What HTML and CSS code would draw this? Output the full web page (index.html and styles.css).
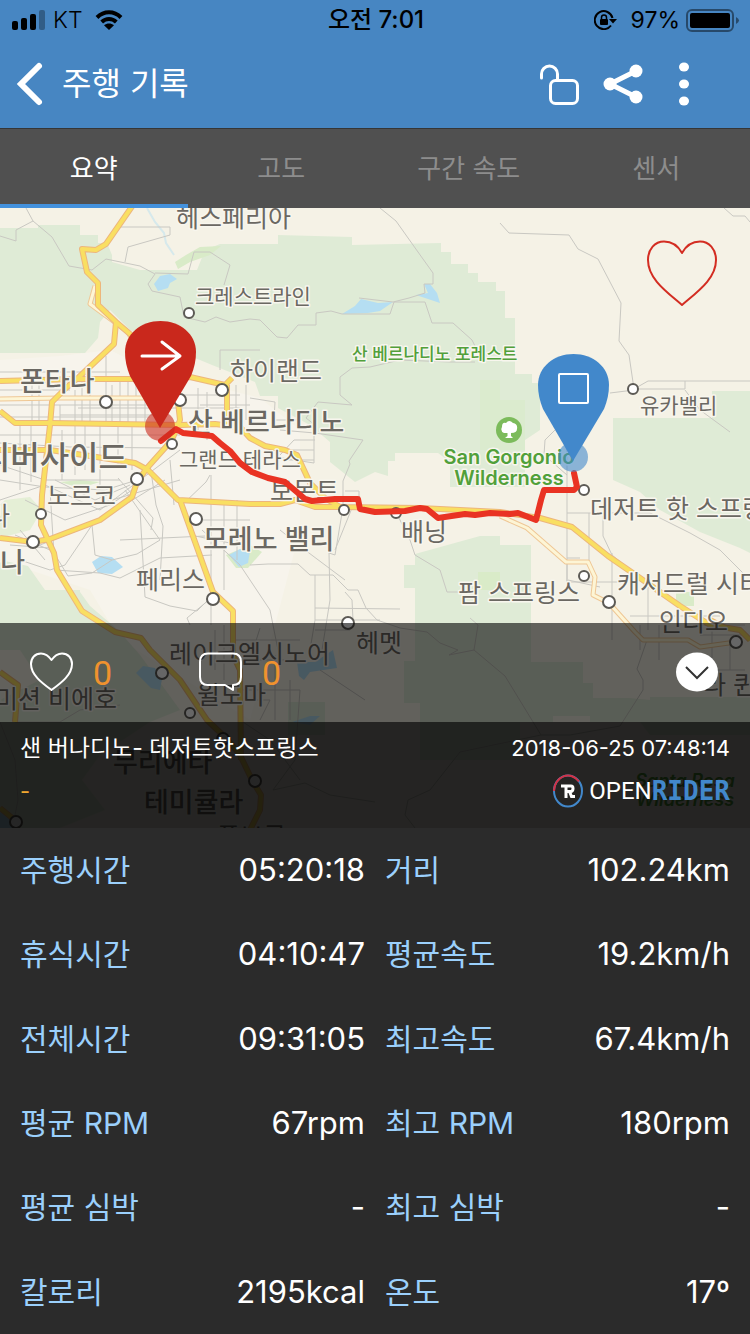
FILE: index.html
```html
<!DOCTYPE html>
<html lang="ko">
<head>
    <meta charset="UTF-8">
    <meta name="viewport" content="width=device-width, initial-scale=1.0">
    <title>주행 기록</title>
    <link rel="stylesheet" href="styles.css">
</head>
<body>
    <div class="status-bar">
        <div class="status-left">
            <svg width="33" height="20" viewBox="0 0 33 20">
                <rect x="0" y="11" width="6" height="9" rx="2"/>
                <rect x="9" y="8" width="6" height="12" rx="2"/>
                <rect x="18" y="4" width="6" height="16" rx="2"/>
                <rect x="27" y="0" width="6" height="20" rx="2" opacity=".3"/>
            </svg>
            <span>KT</span>
            <svg class="wifi" width="28" height="20" viewBox="0 0 28 20">
                <path d="M2 7.500C9 .500 19 .500 26 7.500M6.700 12C11 8 17 8 21.300 12" fill="none" stroke="#000" stroke-width="4"/>
                <path d="M14 20L9 15.200C12 12.800 16 12.800 19 15.200Z"/>
            </svg>
        </div>
        <div class="status-time">오전 7:01</div>
        <div class="status-right">
            <svg width="23" height="20" viewBox="0 0 23 20">
                <path d="M18.500 8A9 9 0 1 0 17 15.500" fill="none" stroke="#000" stroke-width="2"/>
                <path d="M15 9H23L19 13.500Z"/>
                <rect x="6" y="9" width="8" height="6" rx="1"/>
                <path d="M7.500 9V7.500A2.500 2.500 0 0 1 12.500 7.500V9" fill="none" stroke="#000" stroke-width="1.500"/>
            </svg>
            <span>97%</span>
            <svg width="54" height="23" viewBox="0 0 54 23">
                <rect x="1" y="1" width="46" height="21" rx="5" fill="none" stroke="#000" stroke-opacity=".45" stroke-width="2"/>
                <rect x="4" y="4" width="40" height="15" rx="2"/>
                <path d="M50 8Q56 11.500 50 15Z" opacity=".45"/>
            </svg>
        </div>
    </div>

    <header class="header">
        <button class="icon-button back" aria-label="뒤로">
            <svg width="26" height="44" viewBox="0 0 26 44"><path d="M21 4L3 22L21 40" fill="none" stroke="#fff" stroke-width="6" stroke-linecap="round"/></svg>
        </button>
        <h1>주행 기록</h1>
        <button class="icon-button" aria-label="잠금">
            <svg width="40" height="44" viewBox="0 0 40 44" fill="none" stroke="#fff" stroke-width="3" stroke-linecap="round">
                <path d="M.500 16V12A8 8 0 0 1 16.500 12V18"/>
                <rect x="9.500" y="18.500" width="27" height="23" rx="5"/>
            </svg>
        </button>
        <button class="icon-button" aria-label="공유">
            <svg width="40" height="44" viewBox="0 0 40 44" fill="#fff">
                <path d="M33 9L7 22L33 35" fill="none" stroke="#fff" stroke-width="5"/>
                <circle cx="7" cy="22" r="6.500"/><circle cx="33" cy="9" r="6.500"/><circle cx="33" cy="35" r="6.500"/>
            </svg>
        </button>
        <button class="icon-button" aria-label="더보기">
            <svg width="40" height="44" viewBox="0 0 40 44" fill="#fff">
                <ellipse cx="19" cy="5" rx="5" ry="4.500"/><ellipse cx="19" cy="22" rx="5" ry="4.500"/><ellipse cx="19" cy="39" rx="5" ry="4.500"/>
            </svg>
        </button>
    </header>

    <nav class="tabs">
        <button class="tab active">요약</button>
        <button class="tab">고도</button>
        <button class="tab">구간 속도</button>
        <button class="tab">센서</button>
    </nav>

    <section class="map">
        <svg class="map-canvas" viewBox="0 208 750 620" preserveAspectRatio="xMidYMid slice">
            <defs>
                <g id="highways">
                    <path d="M133 205L106 244L96 250L82 249L87 272L98 283V305L116 322L130 334L160 365"/>
                    <path d="M116 322L114 344L79 377L66 388L52 402L50 425L42 495L41 525L48 540L54 553L57 570L82 611L115 632L141 638L150 650L180 680L207 720L228 740L240 755L252 780L261 795L260 810L250 830"/>
                    <path d="M0 381L79 379H135L190 377L225 385L232 378M227 385V424"/>
                    <path d="M0 411L15 423H50L180 425L215 424L240 427L250 438L265 446L285 450L297 455L310 483L325 498L340 507L420 508L500 512L540 518L572 527L608 556L640 578L680 606L710 625L740 630L750 640"/>
                    <path d="M0 450H50L90 456L135 463L148 470L178 500L250 504H280L295 500L315 507H345"/>
                    <path d="M178 402L180 420L172 440L147 468L137 482L132 497L100 520L50 539L33 542L0 538"/>
                    <path d="M180 500L213 592L233 611V655L240 670L241 760"/>
                    <path d="M0 672L18 685L15 722M0 808L16 821M710 620L725 628"/>
                </g>
                <g id="light-roads">
                    <path d="M500 516L527 528L566 562H588L595 577L593 595L609 603L635 632L643 640H688L700 647L736 642"/>
                    <path d="M0 399L60 398H150M95 286L90 304L128 332L135 345"/>
                </g>
            </defs>

            <rect x="-1000" y="0" width="3000" height="1400" fill="#f5f2e6"/>

            <!-- city area -->
            <path d="M0 360L60 356L110 350L150 370L260 398L300 430L300 530L250 720L120 640L90 590L0 560Z" fill="#f7f4ec"/>

            <!-- parks and forest -->
            <g fill="#dfebd6">
                <path d="M0 228H38V225H80V235H98V243H107L112 255V262L140 270H197L205 250L220 244H278V235L352 237V245L441 243V252H451V264H468V273H478V282H496V291H505V318H515V374H532V383H540V430L525 440V487H450V462L438 453H395V461H388V476L375 472L355 482L330 462V442L310 425L278 408V396H260L255 382L212 365L200 360L150 340L130 330L110 310L100 322L98 338L85 353H0Z"/>
                <path d="M613 418H712V391H750V553L740 548L700 532L660 510L640 492L613 480Z"/>
                <path d="M415 554L480 536H500V545H531V662H583V683H593V698H629L650 700V697H750V735H650L640 722H590V716H553V722H520V760H420V703H404V661H415V588H404V565H415Z"/>
                <path d="M0 560L28 566L45 590H80V592L90 606L118 630L140 655L180 710L150 722L100 755L82 780L105 810L60 828H0V700L40 680L20 650L0 650Z"/>
                <path d="M288 702H325V735H288Z"/>
            </g>
            <g fill="#d9ebc8">
                <path d="M175 262L186 255L200 247L221 246L210 255L190 262L178 269Z"/>
                <path d="M480 380H500V400H525V450H480Z" opacity=".6"/>
                <path d="M60 482L80 480L100 482L80 488ZM478 572H500V590H478Z"/>
                <path d="M226 555L250 545L262 552L248 568H236Z"/>
                <path d="M676 592H694V606H684L676 600Z"/>
                <path d="M5 500L30 497L42 510L30 530L0 538V505Z" opacity=".6"/>
            </g>

            <!-- lakes -->
            <g fill="#b5def2">
                <path d="M154 284L160 276L170 274L177 279L170 283L168 288L158 291Z"/>
                <path d="M342 314L355 306L361 299L378 303L393 302L380 311L368 313Z"/>
                <path d="M416 295L428 293L424 284L430 284L437 293L440 303L428 299Z"/>
                <path d="M92 562L101 556L112 557L123 567L112 574L98 573Z"/>
                <path d="M229 555L240 549L250 551L248 563L239 567Z"/>
                <path d="M136 673L143 666L155 668L162 679L160 690L151 688Z"/>
                <path d="M297 662L315 662L333 650L337 668L310 672L304 680L299 676Z"/>
                <path d="M292 722L310 716L320 716L310 725ZM0 812L14 820L12 828H0Z"/>
            </g>
            <path d="M147 208L155 222L164 233L166 243L174 255" fill="none" stroke="#d6e9ec" stroke-width="2"/>

            <!-- local roads -->
            <g class="road-minor">
                <path d="M26 208L33 221L52 237L69 266L92 270L106 259L140 266L155 274L148 284L152 291L180 297L184 317L205 322L216 317L230 322L250 319L260 320L277 337L287 338L298 325H316V313L331 311L342 314H390L394 302H425L432 323H453L472 340L475 346"/>
                <path d="M380 208L396 221L418 252L433 273V284H424L425 293L409 298L393 302L359 298"/>
                <path d="M120 227H170V235L128 247L125 262M155 273L188 274L194 252L210 252L230 265L224 285"/>
                <path d="M475 362L450 362L400 360L370 367L352 368L340 377V395L352 405L318 402L306 418L315 425M250 398L275 402L274 420H299"/>
                <path d="M500 223L509 233L569 235L578 249L598 259L621 303L619 341L629 355L634 389L648 381H750M634 389H685V381M610 393L634 390M685 390L700 410L730 432"/>
                <path d="M724 208L733 216H745L750 222M0 236L16 241V230L33 221"/>
                <path d="M32 376V425M39 376V424M60 405V425M75 390V425M82 376V425M90 376V425M106 356V425M112 385V425M120 380V425M128 380V425M136 380V425M145 380V425M198 388V430M207 392V440M236 385V425M246 385V420"/>
                <path d="M0 390H70M0 405H160M60 415H160M78 408H240M0 417H150M180 395H240M200 405H250M0 372H120M220 370V350H260"/>
                <path d="M0 435H180M0 443L70 447L165 448M20 425V490M31 425V482M62 430V480M75 425V475M85 425V470M100 425V490M118 425V465M132 425V470M0 465L45 480H120M0 480L45 487L105 490L137 480L160 455M55 480L95 500L130 485"/>
                <path d="M0 500L45 485L100 510L140 480L180 450M25 500L65 520L110 505L132 490M40 545L92 525L165 480M20 560L50 570L65 565L82 540L92 525L95 555L112 560L137 554L160 540L125 490"/>
                <path d="M20 530L45 560M15 535L50 550M10 545L50 548M50 490L55 570L100 573L120 578L160 558L212 555M54 553L68 576L92 573L112 560M140 510L145 597L170 606L197 611L210 598M150 465L156 505L163 526L160 580M170 460L174 505M95 505L180 480M118 478L153 518L151 530"/>
                <path d="M211 475V625M224 500V590M237 500V560M200 520H250M190 535L240 545M182 505L206 482L210 475M202 530L240 565L270 610L280 660M120 540L205 536M190 625L187 618L210 599"/>
                <path d="M280 430L315 433L363 440L349 461L350 464L343 481V507L335 555L329 553L330 600L322 650M250 565L268 564L298 564L310 575H333L348 590H358L366 608L377 620L400 628L427 632L440 643L458 650L449 655L474 650L505 676L541 735H570L620 726L643 690V680L637 669L647 640"/>
                <path d="M280 455L294 440H315M282 450H314M282 460H314M314 433V463L282 458M345 491H359V500M352 508L335 550M395 510L410 540L415 555L440 570L447 592H470M315 575V620L310 650M315 608L400 609M345 592L352 600L353 620M320 670L365 700"/>
                <path d="M280 530L305 550L345 580M315 620H380M315 630H350M215 630V670M224 625V680M233 640H300M260 628L250 660H300M275 655V720M290 680V720M240 690H300L295 760L273 790M250 700H270L260 720M240 720L270 740L300 780"/>
                <path d="M567 438V585M589 513V560M567 513H603V536L612 555L628 568M603 513H650L690 533L720 550L745 575M567 558H580M568 580L600 587M567 560V582H620M612 553V640M648 580V630M630 616H720M640 625V650M659 625V660M700 625H745M700 635H745M712 620V660M730 640V670M690 670H745M555 430L545 440L544 455L567 475"/>
                <path d="M541 735L460 752L430 790L408 800L405 815L415 828M0 722L15 760L18 800L14 820M15 722H60L80 710L120 705M273 790L305 783L330 795L375 802M474 650L478 625L470 618"/>
            </g>

            <!-- highways -->
            <use href="#light-roads" class="road-light-case"/>
            <use href="#light-roads" class="road-light"/>
            <use href="#highways" class="road-case"/>
            <use href="#highways" class="road-main"/>

            <!-- town markers -->
            <g class="towns">
                <circle cx="189" cy="313" r="5"/><circle cx="106" cy="402" r="6"/><circle cx="180" cy="400" r="6"/>
                <circle cx="222" cy="390" r="6"/><circle cx="172" cy="444" r="5"/><circle cx="137" cy="479" r="6"/>
                <circle cx="41" cy="514" r="5"/><circle cx="33" cy="542" r="6"/><circle cx="196" cy="519" r="6"/>
                <circle cx="344" cy="510" r="5"/><circle cx="396" cy="513" r="5"/><circle cx="213" cy="599" r="6"/>
                <circle cx="348" cy="623" r="6"/><circle cx="633" cy="389" r="5"/><circle cx="584" cy="490" r="5"/>
                <circle cx="584" cy="576" r="5"/><circle cx="609" cy="602" r="6"/><circle cx="736" cy="642" r="6"/>
                <circle cx="162" cy="673" r="6"/><circle cx="190" cy="713" r="5"/><circle cx="223" cy="739" r="6"/>
                <circle cx="255" cy="781" r="6"/><circle cx="16" cy="822" r="6"/>
            </g>

            <g class="places">
                <text class="size-m" x="176" y="227">헤스페리아</text>
                <text class="size-s" x="195" y="304">크레스트라인</text>
                <text class="size-l" x="20" y="391">폰타나</text>
                <text class="size-m" x="230" y="380">하이랜드</text>
                <text class="size-l" x="188" y="432">산 베르나디노</text>
                <text class="size-xl" x="128" y="469" text-anchor="end">리버사이드</text>
                <text class="size-s" x="179" y="467">그랜드 테라스</text>
                <text class="size-m" x="270" y="500">보몬트</text>
                <text class="size-m" x="47" y="505">노르코</text>
                <text class="size-m" x="10" y="525" text-anchor="end">라</text>
                <text class="size-l" x="25" y="572" text-anchor="end">산타 아나</text>
                <text class="size-l" x="203" y="549">모레노 밸리</text>
                <text class="size-m" x="401" y="541">배닝</text>
                <text class="size-m" x="136" y="589">페리스</text>
                <text class="size-m" x="458" y="602">팜 스프링스</text>
                <text class="size-s" x="640" y="413">유카밸리</text>
                <text class="size-m" x="590" y="518">데저트 핫 스프링스</text>
                <text class="size-m" x="617" y="593">캐서드럴 시티</text>
                <text class="size-m" x="659" y="631">인디오</text>
                <text class="size-m" x="356" y="652">헤멧</text>
                <text class="size-m" x="169" y="663">레이크엘시노어</text>
                <text class="size-m" x="117" y="708" text-anchor="end">미션 비에호</text>
                <text class="size-m" x="197" y="704">윌도마</text>
                <text class="size-m" x="703" y="694">라 퀸타</text>
                <text class="size-l" x="113" y="772">무리에타</text>
                <text class="size-l" x="144" y="812">테미큘라</text>
                <text class="size-m" x="217" y="846">폴브룩</text>
            </g>
            <g class="parks">
                <text class="size-park" x="352" y="360">산 베르나디노 포레스트</text>
                <text class="size-wild" x="509" y="464" text-anchor="middle">San Gorgonio</text>
                <text class="size-wild" x="509" y="485" text-anchor="middle">Wilderness</text>
                <text class="size-wild santa-rosa" x="685" y="787" text-anchor="middle">Santa Rosa</text>
                <text class="size-wild santa-rosa" x="685" y="806" text-anchor="middle">Wilderness</text>
            </g>
            <circle cx="509" cy="430" r="13" fill="#7cbb5b"/>
            <path d="M507.500 433H504Q500 431 502 427Q502 422 506 423Q509 419 513 423Q518 424 517 429Q517 433 511 433V436L513 438H505L507.500 436Z" fill="#fff"/>

            <!-- ride route -->
            <path class="route" d="M161 441L176 429L183 433L212 436L220 443L230 451L240 463L252 472L268 478L285 482L298 493L305 499L312 501L335 499H358L360 509L375 512L405 511L420 508L427 509L438 518L465 514L475 515L490 513L510 514L518 513L536 520L541 500L544 490H574L577 487L574 473"/>

            <!-- start and finish pins -->
            <circle cx="160" cy="426" r="15" fill="#c9281c" opacity=".6"/>
            <path d="M160 428L130 376Q125 364 125 352C125 334 141 321 160.500 321S196 334 196 352Q196 364 191 376Z" fill="#c9281c"/>
            <path d="M142 356H179M162 342L180 356L162 369" fill="none" stroke="#fff" stroke-width="3" stroke-linecap="round" stroke-linejoin="round"/>
            <circle cx="573" cy="457" r="15" fill="#4288cb" opacity=".6"/>
            <path d="M573 461L543 409Q538 397 538 385C538 367 554 354 573.500 354S609 367 609 385Q609 397 604 409Z" fill="#4288cb"/>
            <rect x="559" y="374" width="29" height="29" rx="1" fill="none" stroke="#fff" stroke-width="2"/>
        </svg>

        <button class="favorite" aria-label="즐겨찾기">
            <svg width="70" height="67" viewBox="0 0 70 67"><path d="M35 13C30 4 24 1.500 17 1.500C8 1.500 1 9 1 20C1 39 20 52 35 65C50 52 69 39 69 20C69 9 62 1.500 53 1.500C46 1.500 40 4 35 13Z" fill="none" stroke="#d32d22" stroke-width="2" stroke-linejoin="round"/></svg>
        </button>

        <div class="overlay">
            <div class="actions">
                <button class="action">
                    <svg width="43" height="40" viewBox="0 0 43 40"><path d="M21.500 8C18 3 15 1.500 11 1.500C5 1.500 1 6 1 12C1 23 12 31 21.500 38C31 31 42 23 42 12C42 6 38 1.500 32 1.500C28 1.500 25 3 21.500 8Z" fill="none" stroke="#fff" stroke-width="2" stroke-linejoin="round"/></svg>
                    <span>0</span>
                </button>
                <button class="action">
                    <svg width="43" height="40" viewBox="0 0 43 40"><path d="M9 1.500H34Q42 1.500 42 10V25Q42 33 34 33V38L26 33H9Q1 33 1 25V10Q1 1.500 9 1.500Z" fill="none" stroke="#fff" stroke-width="2" stroke-linejoin="round"/></svg>
                    <span>0</span>
                </button>
                <button class="collapse" aria-label="접기">
                    <svg width="42" height="40" viewBox="0 0 42 40"><ellipse cx="21" cy="20" rx="21" ry="19.500" fill="#fff"/><path d="M10 15L21 26L32 15" fill="none" stroke="#333" stroke-width="2"/></svg>
                </button>
            </div>
            <div class="ride-info">
                <div class="info-row">
                    <h2>샌 버나디노- 데저트핫스프링스</h2>
                    <time datetime="2018-06-25T07:48:14">2018-06-25 07:48:14</time>
                </div>
                <div class="info-row">
                    <span class="memo">-</span>
                    <div class="brand">
                        <svg width="30" height="34" viewBox="0 0 30 34" fill="none">
                            <ellipse cx="15" cy="17" rx="14" ry="15.500" stroke="#4288cb" stroke-width="2"/>
                            <path d="M1 17A14 15.500 0 0 1 26 7.500" stroke="#d33145" stroke-width="2"/>
                            <path d="M8 12H18Q20 12 20 14.500T18 17.500H13M16.500 17.500L18.500 22.500H22M13 12V24" stroke="#fff" stroke-width="3"/>
                        </svg>
                        <span class="brand-open">OPEN</span><span class="brand-rider">RIDER</span>
                    </div>
                </div>
            </div>
        </div>
    </section>

    <dl class="stats">
        <div class="stat"><dt>주행시간</dt><dd>05:20:18</dd></div>
        <div class="stat"><dt>거리</dt><dd>102.24km</dd></div>
        <div class="stat"><dt>휴식시간</dt><dd>04:10:47</dd></div>
        <div class="stat"><dt>평균속도</dt><dd>19.2km/h</dd></div>
        <div class="stat"><dt>전체시간</dt><dd>09:31:05</dd></div>
        <div class="stat"><dt>최고속도</dt><dd>67.4km/h</dd></div>
        <div class="stat"><dt>평균 RPM</dt><dd>67rpm</dd></div>
        <div class="stat"><dt>최고 RPM</dt><dd>180rpm</dd></div>
        <div class="stat"><dt>평균 심박</dt><dd>-</dd></div>
        <div class="stat"><dt>최고 심박</dt><dd>-</dd></div>
        <div class="stat"><dt>칼로리</dt><dd>2195kcal</dd></div>
        <div class="stat"><dt>온도</dt><dd>17º</dd></div>
    </dl>
</body>
</html>
```
FILE: styles.css
```css
* {
    box-sizing: border-box;
}
body {
    margin: 0;
    min-height: 100vh;
    display: flex;
    flex-direction: column;
    background-color: #2b2b2b;
    color: #fff;
    font-family: Inter, "Noto Sans CJK KR", sans-serif;
}
button {
    margin: 0;
    padding: 0;
    border: none;
    background: none;
    color: inherit;
    font: inherit;
    cursor: pointer;
}
svg {
    display: block;
}
h1, h2, dl, dd {
    margin: 0;
    font-weight: normal;
}
.status-bar {
    display: grid;
    grid-template-columns: 1fr auto 1fr;
    align-items: center;
    height: 40px;
    padding: 0 10px 0 12px;
    background-color: #4786c2;
    color: #000;
    font-size: 23px;
    line-height: 40px;
}
.status-left, .status-right {
    display: flex;
    align-items: center;
    gap: 8px;
}
.status-left {
    font-weight: 300;
}
.status-right {
    justify-content: flex-end;
    gap: 6px;
}
.wifi {
    margin-left: 4px;
}
.status-right span {
    margin-left: 8px;
}
.status-time {
    font-size: 24px;
    font-weight: 500;
}
.header {
    display: flex;
    align-items: center;
    gap: 22px;
    height: 88px;
    padding: 0 45px 0 18px;
    background-color: #4786c2;
}
.header h1 {
    flex: 1;
    font-size: 32px;
    line-height: 40px;
}
.icon-button svg {
    overflow: visible;
}
.back {
    width: 22px;
}
.tabs {
    display: flex;
    height: 80px;
    border-top: 1px solid #363636;
    background-color: #505050;
}
.tab {
    flex: 1;
    border-bottom: 4px solid transparent;
    color: #8d8d8d;
    font-size: 26px;
}
.tab.active {
    border-bottom-color: #4391dc;
    color: #fff;
}
.map {
    position: relative;
    height: 620px;
    overflow: hidden;
}
.map-canvas {
    width: 100%;
    height: 100%;
}
.road-minor {
    fill: none;
    stroke: #c9c8c2;
    stroke-width: 1;
}
.road-case, .road-light-case, .road-main, .road-light {
    fill: none;
    stroke-linejoin: round;
}
.road-case {
    stroke: #edb67c;
    stroke-width: 6;
}
.road-main {
    stroke: #f9df62;
    stroke-width: 4;
}
.road-light-case {
    stroke: #efc795;
    stroke-width: 5;
}
.road-light {
    stroke: #fdf5d5;
    stroke-width: 3;
}
.towns circle {
    fill: #fff;
    stroke: #5c5a55;
    stroke-width: 2;
}
.places text, .parks text {
    fill: #6b6862;
    stroke: #f8f6ee;
    stroke-width: 3;
    stroke-linejoin: round;
    paint-order: stroke;
    font-weight: 500;
}
.places .size-s, .places .size-m {
    font-weight: 400;
}
.parks text {
    fill: #51a03a;
}
.size-s {
    font-size: 21px;
}
.size-m {
    font-size: 25px;
}
.size-l {
    font-size: 27px;
}
.size-xl {
    font-size: 32px;
}
.size-park {
    font-size: 17px;
}
.parks .size-wild {
    font-size: 20px;
    font-weight: 600;
}
.parks .santa-rosa {
    font-size: 18px;
    font-style: italic;
    stroke: none;
}
.route {
    fill: none;
    stroke: #e93323;
    stroke-width: 6;
    stroke-linecap: round;
    stroke-linejoin: round;
}
.favorite {
    position: absolute;
    top: 32px;
    right: 33px;
}
.overlay {
    position: absolute;
    right: 0;
    bottom: 0;
    left: 0;
}
.actions {
    display: flex;
    align-items: center;
    gap: 87px;
    height: 99px;
    padding: 0 32px 0 30px;
    background-color: rgba(0, 0, 0, 0.6);
}
.action {
    display: flex;
    align-items: center;
    gap: 20px;
    color: #f0922e;
    font-family: Roboto, sans-serif;
    font-size: 34px;
    line-height: 40px;
}
.action svg, .collapse svg {
    margin-bottom: 2px;
}
.collapse {
    margin-left: auto;
}
.ride-info {
    height: 106px;
    padding: 6px 20px;
    background-color: rgba(0, 0, 0, 0.85);
}
.info-row {
    display: flex;
    align-items: center;
    justify-content: space-between;
    height: 40px;
}
.info-row + .info-row {
    height: 46px;
}
.ride-info h2 {
    font-size: 23px;
    line-height: 40px;
}
.ride-info time {
    font-size: 22px;
    line-height: 40px;
}
.memo {
    color: #f0a830;
    font-size: 22px;
}
.brand {
    display: flex;
    align-items: center;
    line-height: 34px;
}
.brand-open {
    margin-left: 6px;
    font-family: Roboto, sans-serif;
    font-size: 24px;
}
.brand-rider {
    color: #4288cb;
    font-family: "DejaVu Sans Mono", monospace;
    font-size: 26px;
    font-weight: bold;
}
.stats {
    flex: 1;
    display: grid;
    grid-template-columns: 1fr 1fr;
    grid-auto-rows: 1fr;
    column-gap: 20px;
    padding: 0 20px;
}
.stat {
    display: flex;
    align-items: center;
    justify-content: space-between;
    line-height: 40px;
}
.stat dt {
    color: #9bd0fc;
    font-size: 30px;
}
.stat dd {
    font-size: 31px;
}
```
